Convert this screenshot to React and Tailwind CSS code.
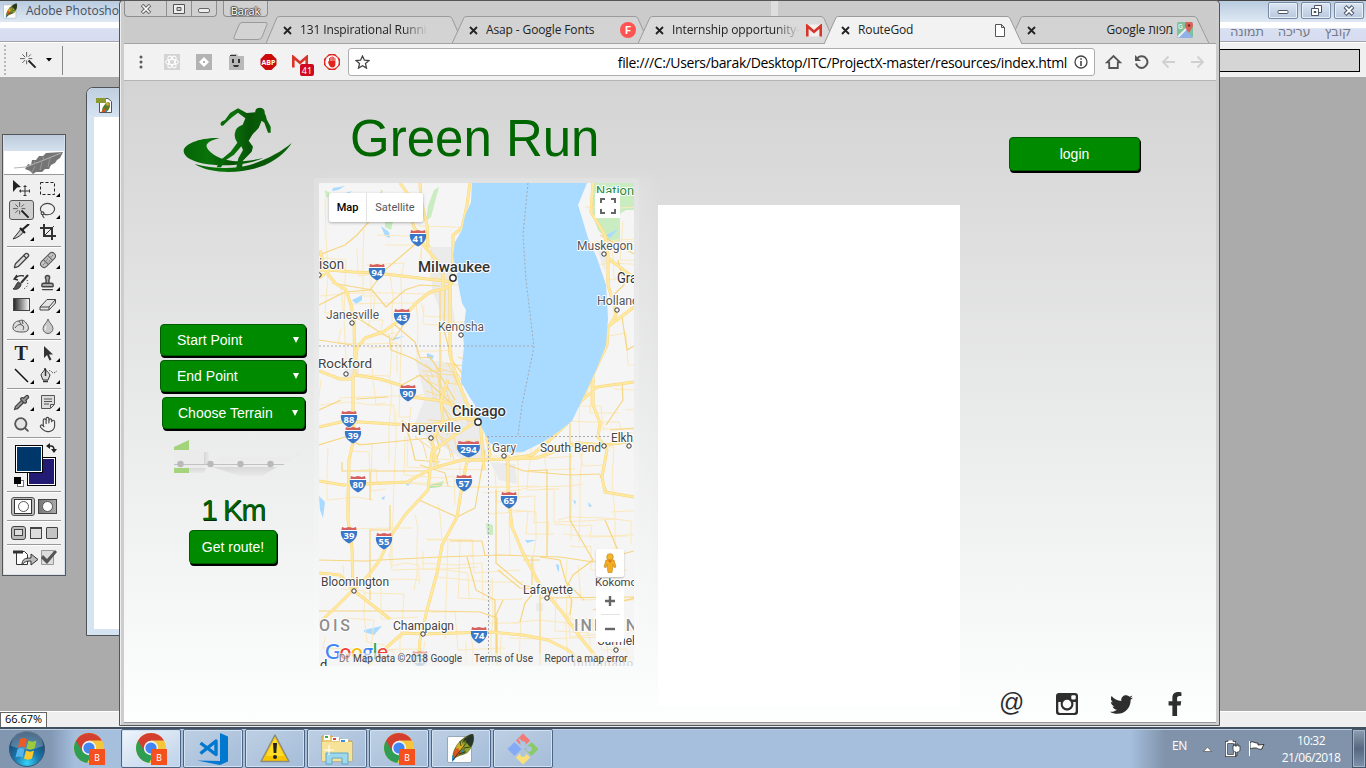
import React from "react";
import { Hand, Lasso, Pencil, Pipette, Search, Stamp } from "lucide-react";
import { FaFacebookF, FaTwitter } from "react-icons/fa";

const ui = "font-['Open_Sans','Noto_Sans',sans-serif]";

/* ---------- shared drawings ---------- */

function WandIcon({ className }) {
  return (
    <svg viewBox="0 0 18 18" className={className} fill="none">
      <path d="M9 9 L16.500 16.500" stroke="#222" strokeWidth="2" />
      <path d="M7 0v5M7 9v4M0 7h5M9 7h4M2.500 2.500l3 3M11.500 2.500L9 5M2.500 11.500l3-3" stroke="#555" strokeWidth="1" />
    </svg>
  );
}

function FeatherIcon({ className }) {
  return (
    <svg viewBox="0 0 28 31" className={className}>
      <rect x="0.5" y="3.500" width="24" height="26" rx="1.500" fill="#fdfdfd" stroke="#9aa7b8" />
      <path d="M6 27 C4 21 8 13 13 8 C17 4 22 1 26 1 C28 8 25 16 20 20 C15 23 11 22 6 27Z" fill="#6d7c28" />
      <path d="M26 1 C28 6 26 11 24 14 L16 8 C19 4 22 1 26 1Z" fill="#29372a" />
      <path d="M18 7l4 6 2 2-4 5-5-8z" fill="#8fa12e" />
      <path d="M9 19 C8 14 11 11 14 8 L17 14 L12 20Z" fill="#d3ae22" />
      <path d="M8 25 C6 20 7 16 11 15 L14 20Z" fill="#d8551d" />
      <path d="M5 22l3 4-3 3zM14 18l3-1-2 4z" fill="#2f8bc7" />
      <path d="M6 27 L24 4M13 8l1 5M18 5v5M12 21l6-2M17 15l6-1" stroke="#232d18" strokeWidth=".8" fill="none" />
    </svg>
  );
}

function DocIcon() {
  return (
    <svg viewBox="0 0 17 17" className="h-[17px] w-[17px]">
      <path d="M3.500 1.500H12l3.500 3V15.500H3.500z" fill="#fff" stroke="#555" />
      <rect x="0" y="1" width="10" height="5" fill="#8a9a2c" />
      <path d="M6 15C6 10 8 7 13 5c2 2 1 8-3 10z" fill="#5d7a2a" />
      <path d="M9 6l3-1 2 3-3 1z" fill="#b9a53a" />
      <path d="M5 15l4-4 1 4z" fill="#d8551d" />
      <path d="M9 15l2-2v2z" fill="#2f8bc7" />
    </svg>
  );
}

function ChromeIcon() {
  return (
    <svg viewBox="0 0 34 34" className="h-[34px] w-[34px]">
      <circle cx="17" cy="16" r="15" fill="#f6c63a" />
      <path d="M17 16 L4 8.500 A15 15 0 0 0 15 30.900 L21 20Z" fill="#2f9e54" />
      <path d="M17 8.500 H30 A15 15 0 0 0 4 8.500 L10.500 19.500 Z" fill="#d43f30" />
      <circle cx="17" cy="16" r="7.200" fill="#f3f3f3" />
      <circle cx="17" cy="16" r="5.600" fill="#4285f4" />
      <rect x="17" y="17" width="16" height="16" fill="#f4511e" />
      <text x="25" y="28.500" textAnchor="middle" fontSize="9" fill="#fff" fontFamily="Roboto">B</text>
    </svg>
  );
}

/* ---------- image editor behind the browser ---------- */

function WindowButton({ children }) {
  return (
    <div className="flex h-[17px] w-[30px] items-center justify-center rounded-[2px] border border-[#7889a5] bg-gradient-to-b from-[#dce6f3] to-[#b8c8dd] shadow-[inset_0_0_0_1px_#e8f0fa]">
      {children}
    </div>
  );
}

function EditorWindow() {
  return (
    <div className="flex h-[727px] w-full flex-col bg-[#ababab]">
      <div className="flex h-[22px] items-center justify-between border-t border-[#444] bg-gradient-to-b from-[#b9cbdf] to-[#dfe9f4] pb-[2px] pl-[3px] pr-[2px]">
        <div className="flex items-center gap-2">
          <FeatherIcon className="h-[16px] w-[15px]" />
          <span className={`${ui} text-[12px] text-[#44505e]`}>Adobe Photoshop</span>
        </div>
        <div className="flex gap-[3px]">
          <WindowButton><svg width="12" height="9"><rect x="1" y="4.500" width="10" height="3" rx="1" fill="#fff" stroke="#4c5668" /></svg></WindowButton>
          <WindowButton><svg width="13" height="13" fill="#fff" stroke="#4c5668"><path d="M4.500 1.500h7v7h-7z" /><path d="M1.500 4.500h7v7h-7z" /><path d="M4 7.500h2v1H4z" /></svg></WindowButton>
          <WindowButton><svg width="12" height="11" fill="none"><path d="M2 1.500l8 8M10 1.500l-8 8" stroke="#4c5668" strokeWidth="4" /><path d="M2.500 2l7 7M9.500 2l-7 7" stroke="#fff" strokeWidth="1.800" /></svg></WindowButton>
        </div>
      </div>
      <div dir="rtl" className="flex h-[20px] items-center gap-[14px] border-b border-[#a1a1a8] bg-gradient-to-b from-white from-30% via-[#d9e0f2] via-35% to-[#d7dcf0] pr-[15px] font-['Noto_Sans','DejaVu_Sans',sans-serif] text-[13px] leading-none tracking-[-0.2px] text-[#777b87]">
        <span>קובץ</span><span>עריכה</span><span>תמונה</span>
      </div>
      <div className="flex h-[35px] items-center justify-between border-t border-white bg-[#f0f0f0] pl-1">
        <div className="flex h-full items-center">
          <div className="h-[30px] border-l-2 border-dotted border-[#b8b8b8]" />
          <WandIcon className="ml-[14px] h-[17px] w-[17px]" />
          <svg width="6" height="4" className="ml-[9px]"><path d="M0 0h6L3 3.500z" fill="#000" /></svg>
          <div className="ml-[10px] h-[29px] border-l border-[#888]" />
        </div>
        <div className="mr-[6px] h-[23px] w-[300px] border border-black bg-[#d5d5d5]" />
      </div>
      <div className="flex-1" />
      <div className="flex h-[16px] border-t border-white bg-[#efefef]">
        <div className={`${ui} flex h-[16px] w-[47px] items-center justify-center border border-[#666] bg-white pb-[3px] text-[11px] leading-none`}>66.67%</div>
      </div>
    </div>
  );
}

function DocumentWindow() {
  return (
    <div className="absolute left-[86px] top-[87px] h-[549px] w-[40px] rounded-tl-[7px] border border-[#4e5359] bg-[#d6e3f1] pl-[7px]">
      <div className="-ml-[7px] flex h-[29px] items-center rounded-tl-[6px] bg-gradient-to-b from-[#bfcfdf] to-[#d6e3f1] pl-[9px] pt-[6px]"><DocIcon /></div>
      <div className="h-[512px] bg-white" />
    </div>
  );
}

function Tool({ children, flyout = true, active }) {
  return (
    <div className={`relative flex h-[20px] w-[25px] items-center justify-center ${active ? "rounded-[3px] border border-[#555] bg-[#cfcfcf]" : ""}`}>
      {children}
      {flyout && !active && <svg className="absolute bottom-[1px] right-0" width="4" height="4"><path d="M4 0v4H0z" fill="#000" /></svg>}
    </div>
  );
}

const Rule = () => <div className="mx-[3px] my-[2px] h-px shrink-0 bg-[#999] shadow-[0_1px_0_#fff]" />;
const ic = "h-[17px] w-[17px] text-[#444]";
const toolGrid = "grid shrink-0 grid-cols-2 content-center justify-items-center gap-y-[2px] pl-[4px] pr-[3px]";

function Toolbox() {
  return (
    <div className="absolute left-[2px] top-[134px] flex h-[442px] w-[64px] flex-col border border-[#555] bg-[#f0f0f0] px-px shadow-[inset_0_0_0_1px_#d3e0f0]">
      <div className="h-[16px] shrink-0 bg-gradient-to-b from-[#bccbdb] to-[#d5e1ee]" />
      <div className="flex h-[24px] shrink-0 items-center justify-end border-b border-[#999] bg-white">
        <svg width="50" height="22" viewBox="0 0 50 22">
          <path d="M11 17L14 12L17 13L18 8L22 8L25 4L29 4L32 1L49 0L46 6L43 8L41 11L37 13L35 17L31 17L28 20L22 20L19 22L16 19Z" fill="#757575" />
          <path d="M0 16l12-1L30 8l17-7" stroke="#b5b5b5" fill="none" />
          <path d="M18 20l3-6M26 18l2-8M34 15l2-9M20 9l2 3M29 5l1 4" stroke="#999" fill="none" />
        </svg>
      </div>
      <div className={`${toolGrid} h-[69px] pt-px`}>
        <Tool flyout={false}>
          <svg width="18" height="16"><path d="M1 0l8 7-4 .5L1 12z" fill="#222" /><path d="M13 6v10M8 11h10" stroke="#333" /><path d="M13 5l2 2h-4zM13 17l2-2h-4zM7 11l2-2v4zM19 11l-2-2v4z" fill="#333" /></svg>
        </Tool>
        <Tool><svg width="17" height="15"><rect x="1.500" y="1.500" width="14" height="12" fill="none" stroke="#222" strokeDasharray="3 2" /></svg></Tool>
        <Tool active><WandIcon className="h-[17px] w-[17px]" /></Tool>
        <Tool><Lasso className={ic} strokeWidth={1.6} /></Tool>
        <Tool><svg width="18" height="16" viewBox="0 0 18 16"><path d="M1 15C5 14 10 11 12 7L9 5z" fill="#ccc" stroke="#333" /><path d="M8 4l5 5M10 6l7-6" stroke="#222" strokeWidth="2.200" /></svg></Tool>
        <Tool flyout={false}><svg width="16" height="16" fill="none"><path d="M4 0v12h12M0 4h12v12" stroke="#333" strokeWidth="2" /><path d="M5 11l9-9" stroke="#333" /></svg></Tool>
      </div>
      <Rule />
      <div className={`${toolGrid} h-[88px]`}>
        <Tool><Pencil className={ic} fill="#ddd" strokeWidth={1.8} /></Tool>
        <Tool>
          <svg width="18" height="18"><g transform="rotate(-45 9 9)"><rect x="0" y="5.500" width="18" height="7" rx="3.500" fill="#c4c4c4" stroke="#555" /><path d="M6 5.500v7M12 5.500v7" stroke="#666" /><path d="M2 9h3M7 8h4M7 10.500h4M13 9h3" stroke="#666" strokeDasharray="1 1" /></g></svg>
        </Tool>
        <Tool><svg width="18" height="17" fill="none"><path d="M1 15c4 1 8-1 8-5L6.500 8C4 9 4 13 1 15z" fill="#555" stroke="#333" /><path d="M9 9l7-8" stroke="#333" strokeWidth="2" /><path d="M3 5c2-3 5-4 9-3M5 1L2 5l4 1" stroke="#333" strokeWidth="1.300" /><path d="M15 6c2 4 0 8-4 9" stroke="#333" strokeDasharray="1 2" /></svg></Tool>
        <Tool><Stamp className={ic} fill="#aaa" strokeWidth={2} /></Tool>
        <Tool>
          <svg width="17" height="13"><defs><linearGradient id="tg"><stop stopColor="#222" /><stop offset="1" stopColor="#fff" /></linearGradient></defs><rect x=".5" y=".5" width="16" height="12" fill="url(#tg)" stroke="#444" /></svg>
        </Tool>
        <Tool><svg width="18" height="13"><path d="M1 9L8 1.500h8.500L10 9zM1 9v3h9V9M10 12l6.500-7V1.500" fill="#e4e4e4" stroke="#444" strokeLinejoin="round" /></svg></Tool>
        <Tool>
          <svg width="18" height="14"><path d="M1 9C1 5 3 2 7 2c3-2 6 0 7 2 2 2 3 4 2 7-1 2-4 2-7 2-4 0-8-1-8-4z" fill="#ddd" stroke="#555" /><path d="M3 9c2-3 4-4 7-3 2 1 2 3 1 5M7 2l2 3M10 1l1 4" stroke="#555" fill="none" /></svg>
        </Tool>
        <Tool><svg width="12" height="16"><path d="M6 1c1 4 5 6 5 9.500a5 5 0 0 1-10 0C1 7 5 5 6 1z" fill="#c9c9c9" stroke="#666" /><path d="M4 8c-1 2-1 3 0 4" stroke="#fff" fill="none" /></svg></Tool>
      </div>
      <Rule />
      <div className={`${toolGrid} h-[44px]`}>
        <Tool><span className="font-['Liberation_Serif',serif] text-[20px] font-bold leading-none text-[#222]">T</span></Tool>
        <Tool><svg width="10" height="15"><path d="M1 0v12l3-3 2.500 5.500 2-1L6 8.500h4z" fill="#333" /></svg></Tool>
        <Tool><svg width="15" height="15"><path d="M1 1l13 13" stroke="#111" strokeWidth="1.500" /></svg></Tool>
        <Tool><svg width="18" height="17" fill="none"><path d="M6 1c0 3-4 5-4 7l2 5h5l2-5c0-2-5-4-5-7z" fill="#ddd" stroke="#333" /><path d="M6.500 2v7M4 14.500h5" stroke="#333" strokeWidth="1.500" /><path d="M10 4c2-2 3 3 5 2l3-2" stroke="#333" strokeDasharray="1 1" /></svg></Tool>
      </div>
      <Rule />
      <div className={`${toolGrid} h-[44px]`}>
        <Tool><Pipette className={ic} fill="#999" strokeWidth={1.8} /></Tool>
        <Tool><svg width="16" height="16"><path d="M1.500 1.500h13v9l-4 4h-9z" fill="#ddd" stroke="#555" /><path d="M4 5h8M4 7.500h8M4 10h5M10.500 14v-3.500H14" stroke="#555" fill="none" /></svg></Tool>
        <Tool flyout={false}><Search className="h-[17px] w-[17px] text-[#555]" strokeWidth={2.6} fill="#e4e4e4" /></Tool>
        <Tool flyout={false}><Hand className={ic} fill="#f2f2f2" strokeWidth={1.6} /></Tool>
      </div>
      <Rule />
      <svg width="60" height="49" viewBox="5 438 60 49" className="shrink-0">
        <rect x="28.500" y="455.500" width="28" height="28" fill="#231a73" stroke="#000" /><rect x="29.500" y="456.500" width="26" height="26" fill="none" stroke="#fff" />
        <rect x="16.500" y="443.500" width="27" height="27" fill="#00376b" stroke="#000" /><rect x="17.500" y="444.500" width="25" height="25" fill="none" stroke="#fff" />
        <path d="M49 444h3c2 0 3 2 3 4" fill="none" stroke="#222" strokeWidth="1.500" /><path d="M51 441v6l-4-3zM52 447h6l-3 4z" fill="#222" />
        <rect x="18.500" y="478.500" width="6" height="6" fill="#fff" stroke="#777" /><rect x="15" y="475" width="7" height="7" fill="#000" />
      </svg>
      <Rule />
      <div className="flex h-[24px] shrink-0 items-center justify-center gap-[3px]">
        <div className="flex h-[19px] w-[24px] items-center justify-center rounded-[3px] border border-[#555] bg-[#bbb]"><div className="flex h-[15px] w-[18px] items-center justify-center border border-[#333] bg-white"><div className="h-[11px] w-[11px] rounded-full border border-[#555]" /></div></div>
        <div className="flex h-[15px] w-[19px] items-center justify-center border border-[#444] bg-gradient-to-r from-[#777] to-[#aaa]"><div className="h-[11px] w-[11px] rounded-full border border-[#555] bg-white" /></div>
      </div>
      <Rule />
      <div className="flex h-[19px] shrink-0 items-center justify-center gap-[4px]">
        <div className="flex h-[14px] w-[15px] items-center justify-center rounded-[3px] border border-[#444] bg-[#bbb]"><div className="h-[7px] w-[9px] border border-[#444] bg-[#ddd]" /></div>
        <div className="h-[12px] w-[12px] border border-t-2 border-[#444] bg-[#ddd]" />
        <div className="h-[12px] w-[12px] rounded-[1px] border border-[#444] bg-[#c4c4c4]" />
      </div>
      <Rule />
      <svg width="60" height="24" viewBox="5 549 60 24" className="shrink-0">
        <path d="M17.500 553.500h8l3 3v10h-11z" fill="#fff" stroke="#333" /><path d="M14 554h10" stroke="#333" strokeWidth="3" />
        <path d="M23 567c0-6 3-7 9-7v-4l7 5.500-7 5.500v-4c-5 0-7 1-9 4z" fill="#bbb" stroke="#333" />
        <path d="M42.500 552.500h12v14h-12z" fill="#ddd" stroke="#999" /><path d="M44 557l4 4 8-9 2 2-10 12-6-6z" fill="#555" />
      </svg>
    </div>
  );
}

/* ---------- browser chrome ---------- */

function TabShapes() {
  return (
    <svg className="absolute left-0 top-0" width="1092" height="43" viewBox="124 1 1092 43" fill="none">
      <g fill="#d3d3d3" stroke="#9b9b9b">
        <path d="M266 43.500L277 17.500Q278 16.500 280 16.500H449Q451 16.500 452 18.500L463 43.500" />
        <path d="M1009 43.500L1021 17.500Q1022 16.500 1024 16.500H1194Q1196 16.500 1197 18.500L1209 43.500" />
        <path d="M452 43.500L464 17.500Q465 16.500 467 16.500H635Q637 16.500 638 18.500L649 43.500" />
        <path d="M638 43.500L650 17.500Q651 16.500 653 16.500H821Q823 16.500 824 18.500L835 43.500" fill="#dadada" />
      </g>
      <path d="M124 43.500H1216" stroke="#a3a3a3" />
      <path d="M824 44L836 17.500Q837 16.500 839 16.500H1007Q1009 16.500 1010 18.500L1022 44" fill="#f2f2f2" stroke="#9b9b9b" />
      <path d="M242 22.500H265Q268 22.500 267 24.500L262 37Q261 39.500 258 39.500H236Q233 39.500 234 37L239 25Q240 22.500 242 22.500Z" fill="#d3d3d3" stroke="#9b9b9b" />
      <rect x="771" y="0" width="7" height="16" fill="#dedede" />
    </svg>
  );
}

function Tab({ title, icon, rtl, fade }) {
  return (
    <div className="flex h-full w-[186px] shrink-0 items-center pl-[17px] pr-[2px]">
      <svg width="9" height="9" className="shrink-0"><path d="M1 1l7 7M8 1l-7 7" stroke="#222" strokeWidth="1.800" /></svg>
      <span dir={rtl ? "rtl" : "ltr"} className={`ml-[8px] flex-1 overflow-hidden whitespace-nowrap text-[12px] tracking-[-0.12px] text-[#222] ${fade ? "[mask-image:linear-gradient(to_right,black_80%,transparent)]" : ""}`}>{title}</span>
      <span className={rtl ? "ml-[4px] shrink-0" : "ml-[6px] shrink-0"}>{icon}</span>
    </div>
  );
}

const MailM = () => (
  <svg width="16" height="13" viewBox="0 0 16 13" className="block"><path d="M1 .5h14v12H1z" fill="#f4f0ef" /><path d="M1.300 12.500V2L8 7.800 14.700 2v10.500" fill="none" stroke="#d5352a" strokeWidth="2.600" /></svg>
);

function BrowserTop() {
  const caption = "flex h-full items-center justify-center";
  return (
    <div className={`${ui} relative h-[43px] bg-[#cbcbcb]`}>
      <TabShapes />
      <div className="relative flex h-[16px] gap-[6px]">
        <div className="flex h-full w-[93px] divide-x divide-[#8e8e8e] rounded-b-[4px] border border-t-0 border-[#8e8e8e] bg-[#d0d0d0]">
          <div className={`${caption} w-[42px]`}><svg width="12" height="10" fill="none"><path d="M2 1l8 8M10 1l-8 8" stroke="#666" strokeWidth="3.600" /><path d="M2.500 1.500l7 7M9.500 1.500l-7 7" stroke="#fff" strokeWidth="1.600" /></svg></div>
          <div className={`${caption} w-[25px]`}><svg width="12" height="10"><path d="M.5.5h11v9H.5z" fill="#eee" stroke="#555" /><path d="M4 3.500h4v3H4z" fill="#ccc" stroke="#555" /></svg></div>
          <div className={`${caption} flex-1`}><svg width="12" height="9"><rect x=".5" y="4.500" width="11" height="4" rx="1.500" fill="#eee" stroke="#666" /></svg></div>
        </div>
        <div className="flex h-full w-[45px] items-center justify-center rounded-b-[4px] border border-t-0 border-[#8e8e8e] bg-[#d0d0d0] pt-[3px] text-[11px] leading-none text-white [text-shadow:1px_0_1px_#444,-1px_0_1px_#444,0_1px_1px_#444,0_-1px_1px_#444]">Barak</div>
      </div>
      <div className="relative ml-[142px] flex h-[26px] items-center">
        <Tab fade title="131 Inspirational Running" icon={<span className="block w-[16px]" />} />
        <Tab title="Asap - Google Fonts" icon={<span className="flex h-[16px] w-[16px] items-center justify-center rounded-full bg-[#ff5252] font-[Roboto] text-[11px] font-bold leading-none text-white">F</span>} />
        <Tab fade title="Internship opportunity- n" icon={<MailM />} />
        <Tab title="RouteGod" icon={<svg width="12" height="15" className="mr-[2px]"><path d="M1.500 1.500h6l3 3v9h-9zM7.500 1.500v3h3" fill="#fff" stroke="#555" /></svg>} />
        <Tab rtl title="מפות Google" icon={
          <svg width="17" height="17" viewBox="0 0 17 17"><rect width="16" height="16" rx="2" fill="#7ec29b" /><path d="M0 16L9 7l7 9z" fill="#8fb1e8" /><path d="M1 15L15 1" stroke="#eee" strokeWidth="2" /><path d="M12 11c-4-5-4-6-4-8a4 4 0 0 1 8 0c0 2-1 3-4 8z" fill="#d9635b" /><circle cx="12" cy="3.500" r="1.300" fill="#7d2a26" /><text x="1" y="7" fontSize="7" fill="#fff" fontFamily="Roboto">G</text></svg>
        } />
      </div>
    </div>
  );
}

function BrowserToolbar() {
  return (
    <div className="flex h-[37px] items-center border-b border-[#b4b4b4] bg-[#f2f2f2] pl-[15px]">
      <svg width="4" height="16" fill="#5a5a5a"><circle cx="2" cy="3" r="1.500" /><circle cx="2" cy="8" r="1.500" /><circle cx="2" cy="13" r="1.500" /></svg>
      <div className="ml-[21px] flex items-center gap-[16px]">
        <svg width="16" height="16"><rect width="16" height="16" fill="#d4d4d4" /><g fill="none" stroke="#fff"><ellipse cx="8" cy="8" rx="6.500" ry="2.600" /><ellipse cx="8" cy="8" rx="6.500" ry="2.600" transform="rotate(60 8 8)" /><ellipse cx="8" cy="8" rx="6.500" ry="2.600" transform="rotate(120 8 8)" /></g></svg>
        <svg width="16" height="16"><rect width="16" height="16" fill="#b3b3b3" /><path d="M8 3l5 5-5 5-5-5z" fill="#fff" /><path d="M7 7h2v2H7z" fill="#b3b3b3" /></svg>
        <svg width="16" height="16"><path d="M3 0h6l1 2h6v14H1V2h2z" fill="#b9b9b9" /><path d="M2 1h6v1H2zM4 5h2v4H4zM10 5h2v4h-2zM5 11h6l-1 2H6z" fill="#333" /></svg>
        <svg width="17" height="16" viewBox="0 0 16 16"><path d="M5 0h6l5 5v6l-5 5H5l-5-5V5z" fill="#cc0a0a" /><text x="8" y="10.700" textAnchor="middle" fontFamily="Open Sans" fontSize="7" fontWeight="bold" fill="#fff">ABP</text></svg>
        <div className="relative -ml-px h-[16px] w-[16px] pt-px">
          <MailM />
          <span className="absolute left-[8px] top-[10px] flex h-[12px] w-[14px] items-center justify-center rounded-[2px] bg-[#cf0a20] font-['Noto_Sans',sans-serif] text-[9px] leading-none text-white">41</span>
        </div>
        <svg width="16" height="16"><path d="M5 0h6l5 5v6l-5 5H5l-5-5V5z" fill="#e2241d" /><circle cx="8" cy="8" r="6.800" fill="#fff" /><path d="M4 8l1-1V4h1.300V3h1.300v-.600h1.300V3h1.300v1h1.200v6c0 3-2 3.500-3.500 3.500C6 13.500 5 11 4 8z" fill="#e2241d" /><path d="M6.300 4v3M7.700 3v4M9 3v4M10.300 4v3" stroke="#fff" strokeWidth=".5" /></svg>
      </div>
      <div className={`${ui} ml-[8px] flex h-[28px] w-[747px] items-center justify-between rounded-[3px] border border-[#adadad] bg-white pl-[6px] pr-[6px]`}>
        <svg width="15" height="14" viewBox="0 0 15 14"><path d="M7.500 1l1.900 4.200 4.600.4-3.500 3 1 4.500-4-2.400-4 2.400 1-4.500-3.500-3 4.600-.4z" fill="none" stroke="#444" strokeWidth="1.300" /></svg>
        <div className="flex items-center gap-[7px]">
          <span className="whitespace-nowrap text-[14px] tracking-[-0.35px] text-black">file:///C:/Users/barak/Desktop/ITC/ProjectX-master/resources/index.html</span>
          <svg width="14" height="14"><circle cx="7" cy="7" r="6" fill="none" stroke="#444" strokeWidth="1.300" /><path d="M6.200 3.200h1.600v1.600H6.200zM6.200 6h1.600v5H6.200z" fill="#444" /></svg>
        </div>
      </div>
      <svg className="ml-[10px]" width="17" height="16"><path d="M2 8.300L8.500 2 15 8.300h-2.200V14H4.200V8.300z" fill="none" stroke="#555" strokeWidth="1.800" /></svg>
      <svg className="ml-[12px]" width="15" height="16" viewBox="0 0 15 16"><path d="M3.500 4A5.800 5.800 0 1 1 2 9.500" fill="none" stroke="#555" strokeWidth="2" /><path d="M1 1v6h6z" fill="#555" /></svg>
      <svg className="ml-[12px]" width="15" height="14"><path d="M14 7H2M7.500 1.500L2 7l5.500 5.500" fill="none" stroke="#d0d0d0" strokeWidth="1.800" /></svg>
      <svg className="ml-[14px]" width="15" height="14"><path d="M1 7h12M7.500 1.500L13 7l-5.500 5.500" fill="none" stroke="#d0d0d0" strokeWidth="1.800" /></svg>
    </div>
  );
}

/* ---------- map ---------- */

const highways = [
  "M319 278L330 270L353 272L377 273L410 277L453 282", "M319 270L345 270",
  "M400 183L410 197L413 225L425 247L438 262L443 275V290",
  "M420 183L421 200L427 225L428 248", "M470 183L467 205L462 228L453 235V282",
  "M450 282V355L457 378L466 402L474 415", "M453 282L446 288L430 292L416 303L403 318L383 332L365 338L357 348L354 375",
  "M320 250L325 270L335 283L346 290L351 305L354 320L355 375L380 379L400 385L411 397L443 401L464 410L477 418",
  "M319 371L340 379H354", "M353 375V410L354 438L349 460L348 520L352 548L353 590", "M319 427L345 421L392 424L430 425L462 418L478 420",
  "M319 481L343 485L407 482L433 468L462 460L510 459L537 458L553 452L577 443L605 445L634 441",
  "M473 424L455 435L432 452L428 490L405 515L390 537L380 560L367 577L353 590L335 608L319 623",
  "M319 573L340 575L353 590L390 619", "M468 440V457L463 480L457 517L442 545L437 573L427 610L420 640L418 665",
  "M508 455V493L512 527L523 553L541 587L562 612L580 637L593 653L604 665",
  "M368 665L388 646L403 633L423 634L490 632L523 635L548 640L568 650L584 664",
  "M593 183L591 212L605 235L608 255V285L614 305L616 315L608 328L607 345L595 370L585 393L575 410L566 425L550 440L532 455L508 459",
  "M608 258L634 278", "M610 325L634 307", "M593 375V405L600 423L598 437L607 450L602 477L605 492L634 497",
  "M577 405L597 387L634 382", "M437 465L432 440L443 420L441 400L448 380", "M484 420L490 455L487 462M480 418L484 470",
];

const roads = [
  "M319 340L352 345M319 305L345 292L370 290L385 270L420 240", "M319 255L345 245L357 235L375 215L382 190",
  "M332 283L372 290L386 307L405 290L420 285L440 286", "M353 315L378 331L393 340L407 320",
  "M389 335L391 350L412 358L440 375L455 400", "M395 325L415 342L420 358L430 357L440 372",
  "M402 385L420 375L440 393L458 410", "M440 290V400L452 425", "M445 290L444 330L452 360L463 375",
  "M319 410L341 400M356 399L388 397M319 445L345 437L360 445L430 438",
  "M342 462V471L430 471M370 472V500M319 560L360 561L440 557L500 555L560 557L593 562L634 551",
  "M319 611H430L480 612L497 618V665M390 505V530H370V600", "M419 500L457 517L475 508L485 450",
  "M450 541H482L485 556M420 465L445 473L448 486M467 557L476 590L495 600V633",
  "M496 490V563L521 584L540 590V665M523 560H540M532 557V585M540 557L560 560L566 582L584 600",
  "M505 464L524 471L570 475L600 474M524 471L547 470V558M570 423V520L593 560L573 575L565 590L572 600L570 615",
  "M498 570L520 588L541 590M503 600L496 615V662M520 622L525 603L540 585",
  "M434 430L440 450L435 463M402 420L410 438L415 460L440 462", "M610 430L634 428M622 382L623 400L606 425",
  "M600 475L607 492M605 520L620 555L600 565L600 620M593 610L634 598M540 598L634 597",
  "M600 235L634 254M618 260L624 285L608 300M622 317L627 350L634 346",
];

const minorRoads = (() => {
  let s = 17;
  const rnd = () => ((s = (s * 16807) % 2147483647) / 2147483647);
  const out = [];
  for (let i = 0; i < 105; i++) {
    let x = 319 + rnd() * 310, y = 183 + rnd() * 478;
    let d = `M${x.toFixed(0)} ${y.toFixed(0)}`;
    let horizontal = rnd() > 0.5;
    for (let k = 0; k < 4; k++) {
      const step = 10 + rnd() * 32;
      x += horizontal ? step : rnd() * 6 - 3;
      y += horizontal ? rnd() * 6 - 3 : step;
      d += `L${x.toFixed(0)} ${y.toFixed(0)}`;
      horizontal = rnd() > 0.45 ? horizontal : !horizontal;
    }
    out.push(d);
  }
  return out.join("");
})();

const cityStreets = (() => {
  let s = 91;
  const rnd = () => ((s = (s * 16807) % 2147483647) / 2147483647);
  let d = "";
  for (let i = 0; i < 32; i++) {
    const x = 415 + rnd() * 48, y = 350 + rnd() * 90;
    d += `M${x.toFixed(0)} ${y.toFixed(0)}l${(rnd() * 22).toFixed(0)} ${(rnd() * 16).toFixed(0)}l${(rnd() * 5).toFixed(0)} ${(rnd() * 18).toFixed(0)}`;
  }
  return d;
})();

const lake = "M472 183L471 202L465 216L462 230L455 242L453 256L457 275L459 288L462 303L466 310L465 318L463 332L464 347L462 365L461 382L469 396L475 405L477 418L483 430L490 443L503 453L523 452L543 442L558 432L572 421L583 398L597 368L606 345L608 318L606 285L597 258L588 238L582 218L578 205L587 183Z";

const shields = [
  [418, 238, "41"], [377, 272, "94"], [402, 317, "43"], [408, 393, "90"], [349, 419, "88"], [353, 435, "39"],
  [358, 484, "80"], [464, 483, "57"], [509, 500, "65"], [349, 535, "39"], [384, 541, "55"], [479, 635, "74"], [420, 659, "57"],
];

const places = [
  ["Milwaukee", 418, 272, 72, 15, "#333", 500, 453, 278], ["Chicago", 452, 416, 54, 15, "#333", 500, 478, 422],
  ["Muskegon", 577, 250, 56, 12.5, "#555", 400, 604, 254], ["Holland", 597, 305, 42, 12.5, "#555", 400, 617, 310],
  ["Gra", 617, 283, 20, 14, "#333", 400], ["ison", 319, 269, 25, 14, "#444", 400, 319, 275],
  ["Janesville", 326, 319, 53, 12.5, "#555", 400, 352, 323], ["Kenosha", 438, 331, 46, 12.5, "#555", 400, 461, 335],
  ["Rockford", 318, 368, 54, 13.5, "#444", 400, 346, 374], ["Naperville", 401, 432, 60, 13.5, "#444", 400, 431, 438],
  ["Gary", 492, 452, 24, 12.5, "#555", 400, 504, 456], ["South Bend", 540, 452, 61, 12.5, "#444", 400, 604, 446],
  ["Elkh", 611, 442, 22, 12.5, "#444", 400, 629, 446], ["Bloomington", 321, 586, 68, 12.5, "#444", 400, 354, 591],
  ["Lafayette", 523, 594, 50, 12.5, "#444", 400, 547, 598], ["Champaign", 393, 630, 61, 12.5, "#444", 400, 423, 634],
  ["Kokomo", 595, 586, 42, 11.5, "#444", 400], ["Carmel", 597, 645, 38, 12.5, "#444", 400, 616, 650],
];

function RouteMap() {
  return (
    <svg width="315" height="483" viewBox="319 183 315 483" className="block" fontFamily="Roboto, sans-serif">
      <rect x="319" y="183" width="315" height="483" fill="#f5f5f5" />
      <g fill="#ebebeb">
        <path d="M430 247h22v58l4 20-12 10-4-25-8-20z" /><path d="M415 358l35 5 15 30 15 35 8 30-20 5-30-20-25-15 12-30z" />
        <path d="M490 462l25 2 2 20-18-4z" /><path d="M597 250l10 2-2 20zM536 603h7v8h-7zM345 365h14v12h-14z" />
      </g>
      <g fill="#c9edc0">
        <path d="M593 183h41v27h-8l-6 4v28h-10l-12-12-5-14z" /><path d="M434 190l5-3-4 15-4 15-5 4 2-15z" />
        <path d="M486 523l7 2v10h-6zM385 220l8 2-2 8-6-3zM325 190l7 4-6 4z" /><path d="M429 485l15-4-3 6-11 1z" fill="#b7e3ac" />
      </g>
      <g fill="#a9daff">
        <path d="M333 188l12-2-7 4-6 1zM342 194l10-3-8 6zM358 216l3 2-2 4-3-1zM381 226l8 6 1 6-5-2zM352 300l10-5v5l-6 4zM393 338l12-2-8 3-3 1zM427 353l7 3-2 4-5-2z" />
        <path d="M319 496l6 6-2 16-3-8zM381 498l4-2-1 4zM405 483l8-3-5 6zM525 540h12l-10 3zM573 500l3 1-1 4zM588 502l4 4-3 1zM556 564l3 1v7l-2-3zM364 630l18-4-8 9-10-3zM606 235l12-6-8 9z" />
      </g>
      <g fill="none" strokeLinejoin="round">
        <path d={minorRoads} stroke="#fbe9bd" strokeWidth="1" />
        <path d={cityStreets} stroke="#f9dd98" strokeWidth="1" />
        <path d={roads.join("")} stroke="#f7d680" strokeWidth="1.200" />
        <path d={highways.join("")} stroke="#f8d67a" strokeWidth="3" />
        <path d={highways.join("")} stroke="#ffe89f" strokeWidth="2.200" />
      </g>
      <path d={lake} fill="#a9daff" />
      <g fill="none" stroke="#a6a9b0" strokeWidth="1" strokeDasharray="2 2">
        <path d="M528 183L523 235L526 280L534 347L522 405L518 435" />
        <path d="M319 346H534M487 436.500H634M488.500 436V665" />
      </g>
      <g stroke="#fff" strokeWidth="2" paintOrder="stroke" strokeLinejoin="round">
        <text x="596" y="195" fontSize="12.500" fill="#2a8a3c" textLength="38" lengthAdjust="spacingAndGlyphs">Nation</text>
        <text x="319" y="631" fontSize="16" fontWeight="500" fill="#8e8e8e" textLength="31">OIS</text>
        <text x="574" y="631" fontSize="16" fontWeight="500" fill="#8e8e8e" textLength="76">INDIANA</text>
        <text x="573" y="667" fontSize="11.500" fill="#999" textLength="64">Indianapol</text>
        <text x="320" y="669" fontSize="13" fill="#333">d</text>
        {places.map(([n, x, y, w, fs, fill, fw]) => (
          <text key={n} x={x} y={y} fontSize={fs} fill={fill} fontWeight={fw} textLength={w} lengthAdjust="spacingAndGlyphs">{n}</text>
        ))}
      </g>
      {places.filter((p) => p[7]).map((p) => (
        <circle key={p[0]} cx={p[7]} cy={p[8]} r={p[6] === 500 ? 3.2 : 2.2} fill="#fff" stroke="#333" strokeWidth={p[6] === 500 ? 1.4 : 1} />
      ))}
      {shields.map(([x, y, n], i) => (
        <g key={i} transform={`translate(${x} ${y})`} opacity={i === 12 ? 0.5 : 1}>
          <path d="M-7 -8L-4 -7L0 -8L4 -7L7 -8L8 -3H-8Z" fill="#d5605f" />
          <path d="M-8 -4.500H8C9 2 5 6 0 8.500C-5 6 -9 2 -8 -4.500Z" fill="#3978c9" /><path d="M-8 -4.500H8" stroke="#fff" />
          <text y="4" textAnchor="middle" fontSize="9.500" fontWeight="bold" fill="#fff" fontFamily="Open Sans">{n}</text>
        </g>
      ))}
      <g transform="translate(468.500 449)">
        <path d="M-10 -8L-5 -7L0 -8L5 -7L10 -8L11 -3H-11Z" fill="#d5605f" /><path d="M-11 -4.500H11C13 2 8 6 0 8.500C-8 6 -13 2 -11 -4.500Z" fill="#3978c9" /><path d="M-11 -4.500H11" stroke="#fff" />
        <text y="4" textAnchor="middle" fontSize="9.500" fontWeight="bold" fill="#fff" fontFamily="Open Sans">294</text>
      </g>
      <text x="325" y="659" fontSize="21" fontFamily="Lato" fontWeight="500" stroke="#fff" strokeWidth="1.500" paintOrder="stroke" textLength="63">
        <tspan fill="#4285f4">G</tspan><tspan fill="#ea4335">o</tspan><tspan fill="#fbbc05">o</tspan><tspan fill="#4285f4">g</tspan><tspan fill="#34a853">l</tspan><tspan fill="#ea4335">e</tspan>
      </text>
      <rect x="338" y="653" width="296" height="13" fill="#f5f5f5" opacity=".6" />
      <g fontSize="10" fill="#444">
        <text x="339" y="662" fill="#777">Dt</text>
        <text x="353" y="662" textLength="109">Map data ©2018 Google</text>
        <text x="474" y="662" textLength="59">Terms of Use</text>
        <text x="544.500" y="662" textLength="83">Report a map error</text>
      </g>
    </svg>
  );
}

function MapCard() {
  return (
    <div className="relative h-[483px] w-[315px] shrink-0 shadow-[0_0_0_5px_rgba(255,255,255,0.14),12px_2px_12px_8px_rgba(255,255,255,0.12)]">
      <RouteMap />
      <div className="absolute left-[10px] top-[10px] flex h-[29px] items-center rounded-[2px] bg-white font-[Roboto] text-[11px] shadow-[0_1px_3px_rgba(0,0,0,0.3)]">
        <span className="flex h-full w-[38px] items-center justify-center border-r border-[#e5e5e5] pt-px font-medium text-black">Map</span>
        <span className="flex h-full w-[56px] items-center justify-center pt-px text-[#565656]">Satellite</span>
      </div>
      <div className="absolute right-[14px] top-[10px] flex h-[25px] w-[25px] items-center justify-center bg-white">
        <svg width="16" height="16" fill="none" stroke="#666" strokeWidth="2"><path d="M1 5V1h4M11 1h4v4M15 11v4h-4M5 15H1v-4" /></svg>
      </div>
      <div className="absolute right-[10px] top-[366px] flex h-[28px] w-[28px] items-center justify-center rounded-[2px] bg-white shadow-[0_1px_2px_rgba(0,0,0,0.25)]">
        <svg width="14" height="21" viewBox="0 0 14 21"><circle cx="7" cy="4" r="3.300" fill="#f4b52c" stroke="#c98b1b" strokeWidth=".7" /><path d="M3 7h8l2 7-2 .5-1-3-1 8H5l-1-8-1 3-2-.5z" fill="#f4ae22" stroke="#c98b1b" strokeWidth=".7" /><path d="M5 7.500h4L7 10z" fill="#e26b1d" /></svg>
      </div>
      <div className="absolute right-[10px] top-[404px] flex h-[55px] w-[28px] flex-col items-center justify-evenly rounded-[2px] bg-white">
        <svg width="12" height="12"><path d="M6 1v10M1 6h10" stroke="#666" strokeWidth="2.400" /></svg>
        <div className="h-px w-[19px] bg-[#e2e2e2]" />
        <svg width="12" height="12"><path d="M1 6h10" stroke="#666" strokeWidth="2.400" /></svg>
      </div>
    </div>
  );
}

/* ---------- page ---------- */

const green = "border border-[#005c00] bg-[#008a00] text-[14px] text-white rounded-[4px] shadow-[1px_2px_0_#000]";

function SelectBox({ label, className }) {
  return (
    <div className={`${green} flex h-[32px] items-center justify-between pr-[6px] ${className}`}>
      <span className="pt-px">{label}</span>
      <svg width="6" height="6"><path d="M0 0h6L3 6z" fill="#fff" /></svg>
    </div>
  );
}

function RunnerLogo() {
  return (
    <svg className="mt-[25px] ml-[59px]" width="110" height="66" viewBox="175 78 330 198">
      <defs><linearGradient id="rg" x1="0" x2="1"><stop stopColor="#046404" /><stop offset=".3" stopColor="#0a730a" /><stop offset=".6" stopColor="#075407" /><stop offset="1" stopColor="#086508" /></linearGradient></defs>
      <g fill="url(#rg)">
        <path d="M285 174C225 172 178 192 177 213C178 238 225 254 290 256C350 257 395 245 415 233C385 242 340 248 307 240C280 234 250 216 246 200C243 188 262 180 285 174Z" />
        <path d="M210 252C260 284 355 282 420 256C462 237 490 208 501 189C470 215 425 240 375 255C330 268 262 267 210 252Z" />
        <path d="M340 85L366 99L392 97Q390 84 407 83Q422 86 420 100Q426 110 426 118L438 140V158L430 158L419 128L411 122L402 144L384 163L372 182L385 200L381 215L354 243L352 272L336 273L334 266L341 235L355 210L350 199L328 224L303 241L289 262L276 262L288 240L318 215L338 188Q327 172 331 158Q332 142 354 134L362 115L340 98L320 113L300 132Q298 138 290 137Q285 132 290 125L301 120L316 99Z" />
      </g>
    </svg>
  );
}

function DistanceSlider() {
  return (
    <svg width="130" height="40" viewBox="170 437 130 40" className="ml-[46px] block">
      <defs>
        <linearGradient id="sl" x1="0" x2="0" y1="0" y2="1"><stop stopColor="#d8d8d8" /><stop offset="1" stopColor="#e9e9e9" /></linearGradient>
        <linearGradient id="sh" x1="0" x2="1"><stop stopColor="#d6d6d6" /><stop offset="1" stopColor="#eaeaea" /></linearGradient>
        <linearGradient id="su" x1="0" x2="0" y1="1" y2="0"><stop stopColor="#eeeeee" /><stop offset="1" stopColor="#e6e6e6" /></linearGradient>
      </defs>
      <path d="M208 464L222 457.500H294L300 454V452L290 460L284 464z" fill="url(#su)" />
      <path d="M212 467L277 467L262 476H240z" fill="url(#sl)" />
      <path d="M174 468H206L204 473H174z" fill="url(#sl)" />
      <path d="M204 452h5v12h-5z" fill="url(#sh)" />
      <path d="M174 450h30v18h-30z" fill="#ebebeb" />
      <path d="M174 447L189 440V450H174zM174 468h15v5h-15z" fill="#a3d37b" />
      <path d="M174 464.500H284" stroke="#c2c2c2" />
      <g fill="#b9b9b9"><circle cx="180.500" cy="464" r="3.200" /><circle cx="210.500" cy="464" r="3.200" /><circle cx="240.500" cy="464" r="3.200" /><circle cx="270.500" cy="464" r="3.200" /></g>
    </svg>
  );
}

function InstagramIcon() {
  return (
    <svg width="24" height="24" viewBox="0 0 24 24">
      <rect x="1" y="1" width="22" height="22" rx="3" fill="#2e2e2e" />
      <path d="M3.300 10h3a6.200 6.200 0 1 0 11.600 0h2.800v9c0 1.200-.8 1.900-1.900 1.900H5.200c-1.100 0-1.900-.7-1.900-1.900z" fill="#fcfcfc" />
      <circle cx="12" cy="12" r="6.300" fill="#2e2e2e" /><circle cx="12" cy="12" r="4.300" fill="#fcfcfc" /><rect x="16.300" y="3.200" width="4.400" height="4.400" rx="1" fill="#fcfcfc" />
    </svg>
  );
}

function WebPage() {
  return (
    <div className="flex h-[641px] flex-col bg-gradient-to-b from-[#d4d4d4] to-[#fdfffe] font-['Liberation_Sans',Arial,sans-serif]">
      <div className="flex h-[102px] shrink-0 items-start">
        <RunnerLogo />
        <h1 className="ml-[57px] mt-[28px] whitespace-nowrap text-[51px] leading-[60px] text-[#006600]">Green Run</h1>
        <button className={`${green} ml-auto mr-[76px] mt-[56px] h-[34px] w-[131px]`}>login</button>
      </div>
      <div className="flex flex-1">
        <div className="flex w-[195px] shrink-0 flex-col pt-[141px]">
          <SelectBox label="Start Point" className="ml-[36px] w-[146px] pl-[16px]" />
          <SelectBox label="End Point" className="ml-[36px] mt-[4px] w-[146px] pl-[16px]" />
          <SelectBox label="Choose Terrain" className="mb-[8px] ml-[38px] mt-[5px] w-[143px] pl-[15px]" />
          <DistanceSlider />
          <div className="ml-[77px] mt-[16px] h-[37px] text-[30px] leading-[34px] tracking-[-1.6px] text-[#006400] [text-shadow:0.5px_0.5px_0_#032803]">1 Km</div>
          <button className={`${green} ml-[65px] h-[34px] w-[88px]`}>Get route!</button>
        </div>
        <MapCard />
        <div className="ml-[24px] mt-[22px] h-[501px] w-[302px] shrink-0 bg-white" />
        <div className="mb-[6px] ml-auto mr-[34px] flex items-center gap-[31px] self-end text-[#2e2e2e]">
          <span className="-mt-1 w-[25px] text-[25px] leading-[26px]">@</span>
          <InstagramIcon />
          <FaTwitter size={23} />
          <FaFacebookF size={24} className="-ml-[1px] -mr-[5px]" />
        </div>
      </div>
    </div>
  );
}

function Browser() {
  return (
    <div className="absolute left-[119px] top-0 h-[726px] w-[1101px] rounded-t-[4px] border border-[#55565a] bg-[#cdcdcd] pb-[2px] pl-[4px] pr-[3px] shadow-[inset_1px_0_0_#eee]">
      <div className="h-full w-[1092px] overflow-hidden border-b border-[#999]">
        <BrowserTop />
        <BrowserToolbar />
        <WebPage />
      </div>
    </div>
  );
}

/* ---------- taskbar ---------- */

function StartOrb() {
  return (
    <svg width="38" height="38" viewBox="0 0 38 38">
      <defs><radialGradient id="orb" cx=".5" cy=".9" r=".9"><stop stopColor="#35d3f5" /><stop offset=".4" stopColor="#1c76ac" /><stop offset="1" stopColor="#16365b" /></radialGradient></defs>
      <circle cx="19" cy="19" r="17.500" fill="url(#orb)" stroke="#3c5572" /><path d="M3 16a16 15 0 0 1 32 0q-16 7-32 0z" fill="#fff" opacity=".25" />
      <path d="M12 9c3-1.500 5-1 7 .5l-2 8c-2-1.500-5-1.500-7 0z" fill="#ee5a26" /><path d="M20.500 10.500c3 1.500 5 1.500 8 0l-2 8c-3 1.500-5 1.500-8 0z" fill="#9bcb3c" />
      <path d="M9.500 19c3-1.500 5-1 7 .5l-2 8c-2-1.500-5-1.500-7 0z" fill="#53b5ec" /><path d="M18 20.500c3 1.500 5 1.500 8 0l-2 8c-3 1.500-5 1.500-8 0z" fill="#fdc82e" />
    </svg>
  );
}

const taskIcons = [
  <ChromeIcon />,
  <svg width="34" height="34" viewBox="0 0 34 34"><path d="M24 1l8 3.500v25L24 33 1 28.500l23 .5z" fill="#0078d0" /><path d="M4.500 11L20 22.500V9L4.500 21.500" fill="none" stroke="#0078d0" strokeWidth="3.400" strokeLinejoin="round" /></svg>,
  <svg width="30" height="30" viewBox="0 0 30 30"><path d="M15 1L29 27.500H1z" fill="#f7c500" stroke="#8b8b82" strokeWidth="1.500" strokeLinejoin="round" /><path d="M15 4L24 22H6z" fill="#ffdc29" /><path d="M13 9h4l-.7 10h-2.600z" fill="#222" /><circle cx="15" cy="23" r="2" fill="#222" /></svg>,
  <svg width="34" height="32" viewBox="0 0 34 32"><path d="M2 3h10l2 3h8l2 2h8v20H2z" fill="#e8cb72" stroke="#c6a24c" /><path d="M4 2h6v5H4z" fill="#fff" /><path d="M5 3h3v2H5z" fill="#3fae3a" /><path d="M12 4h7v4h-7z" fill="#fff" /><path d="M13 5h3v2h-3z" fill="#d6463a" /><path d="M20 6h8v4h-8z" fill="#fff" /><path d="M21 7h4v2h-4z" fill="#3d8fdc" /><path d="M2 9h30v19H2z" fill="#f7e29a" /><path d="M6 20h22v11h-6v-6H12v6H6z" fill="#9fd7ec" stroke="#5fa9c8" /><path d="M9 12v10M4 17h10" stroke="#fff" /></svg>,
  <ChromeIcon />,
  <FeatherIcon className="h-[31px] w-[28px]" />,
  <svg width="32" height="32" viewBox="0 0 32 32"><g transform="rotate(45 16 16)"><rect x="5" y="5" width="10" height="10" fill="#f37b75" /><rect x="17" y="5" width="10" height="10" fill="#8acb68" /><rect x="5" y="17" width="10" height="10" fill="#86abf5" /><rect x="17" y="17" width="10" height="10" fill="#fbe07a" /></g><circle cx="16" cy="11" r="2.800" fill="#aec5e0" /><circle cx="16" cy="21" r="2.800" fill="#aec5e0" /><circle cx="22" cy="16" r="2.800" fill="#aec5e0" /><path d="M12 6l4 5v10M16 11l6 5" stroke="#aec5e0" strokeWidth="2" fill="none" /></svg>,
];

function Taskbar() {
  return (
    <div className="absolute bottom-0 left-0 flex h-[41px] w-full border-t-2 border-[#42505f] bg-[linear-gradient(to_right,#8296b0_0,#8197b2_50px,#a5bfdd_75px,#a5bfdd_1130px,#8193aa_1165px)] shadow-[inset_0_1px_0_#bccfe4]">
      <div className="flex w-[121px] shrink-0 items-center pl-[8px]">
        <StartOrb />
        <div className="ml-[26px]"><ChromeIcon /></div>
      </div>
      <div className="flex gap-[2px]">
        {taskIcons.map((icon, i) => (
          <div key={i} className={`flex h-[39px] w-[60px] items-center justify-center rounded-[2px] border border-[#4e6480] shadow-[inset_0_0_0_1px_#d3e2f1] ${i === 0 ? "bg-gradient-to-br from-[#eff5fb] to-[#bdd1e9]" : "bg-gradient-to-br from-[#bdcfe3] to-[#a5bdd9]"}`}>{icon}</div>
        ))}
      </div>
      <div className={`${ui} ml-auto flex items-center text-[12px] leading-[17px] text-white`}>
        <span className="mb-[6px] tracking-[-0.3px]">EN</span>
        <svg className="ml-[16px]" width="9" height="6"><path d="M.5 5.500h8L4.500 1z" fill="#fff" stroke="#444" strokeWidth=".6" /></svg>
        <svg className="ml-[13px]" width="17" height="18"><path d="M1.500 2.500h8v13h-8zM4 1h3v1H4z" fill="none" stroke="#333" strokeWidth="3" /><path d="M1.500 2.500h8v13h-8zM4 1h3v1H4z" fill="none" stroke="#fff" strokeWidth="1.500" /><path d="M8 6h1V4h1v2h2V4h1v2h2v4c0 2-2 2-3 2v4h-1v-4c-2 0-3-1-3-3z" fill="#fff" stroke="#333" strokeWidth=".8" /></svg>
        <svg className="ml-[6px]" width="17" height="17"><path d="M1.500 1v15M2 2.500c3-2 5 1 8 .500v2l6-.5c-1 2-2 3-2 4.500-4 1-4-1-6-1s-4 0-6 1z" fill="#fff" stroke="#333" /><path d="M1.500 1v15" stroke="#fff" /></svg>
        <div className="ml-[16px] flex w-[60px] flex-col items-center whitespace-nowrap tracking-[-0.5px]"><span>10:32</span><span>21/06/2018</span></div>
        <div className="ml-[11px] h-full w-[14px] border border-[#46566b] bg-gradient-to-b from-[#8e9fb3] via-[#566880] to-[#7d92ab] shadow-[inset_0_0_0_1px_#a5b4c5]" />
      </div>
    </div>
  );
}

export default function App() {
  return (
    <main className="relative h-[768px] w-[1366px] overflow-hidden bg-[#ababab]">
      <EditorWindow />
      <DocumentWindow />
      <Toolbox />
      <Browser />
      <Taskbar />
    </main>
  );
}
